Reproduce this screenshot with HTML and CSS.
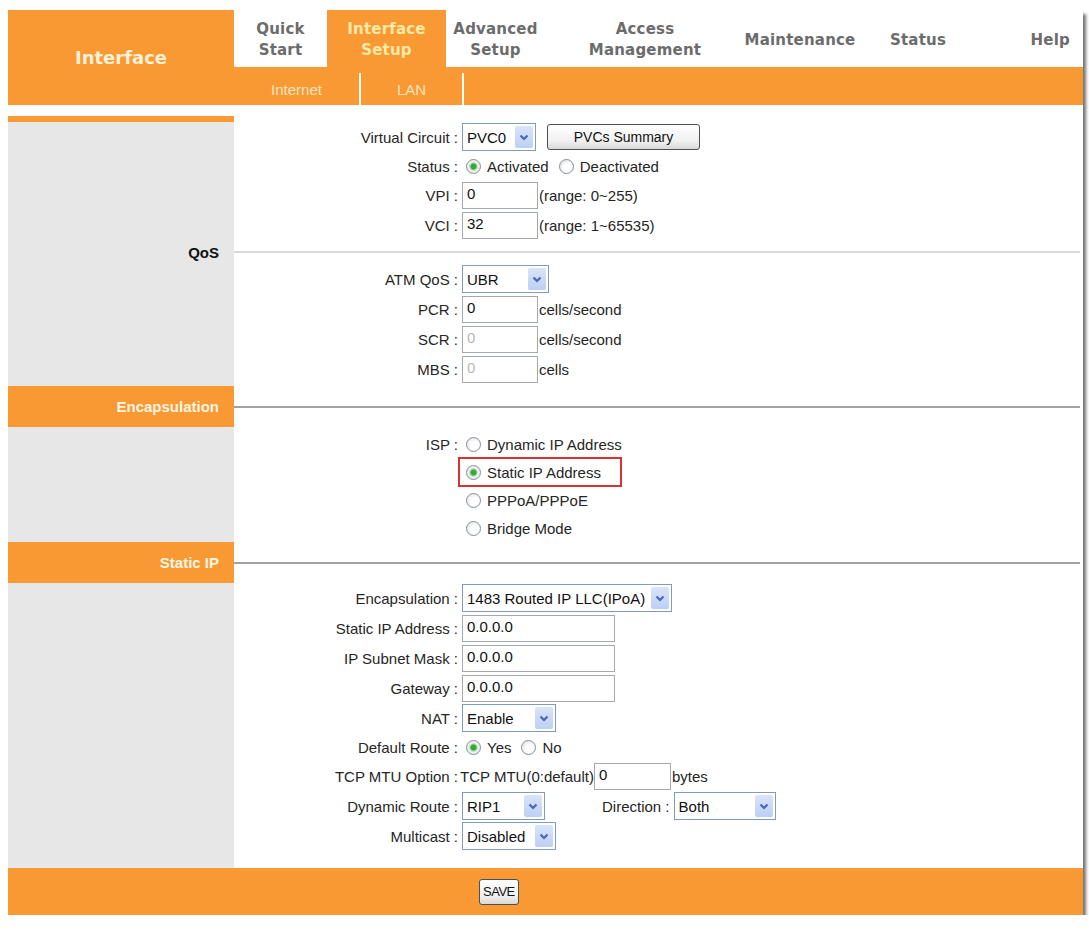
FILE: index.html
```html
<!DOCTYPE html>
<html lang="en">
<head>
  <meta charset="UTF-8">
  <meta name="viewport" content="width=device-width, initial-scale=1.0">
  <title>Interface Setup - Internet</title>
  <link rel="stylesheet" href="styles.css">
</head>
<body>
  <div class="page">
    <header class="topbar">
      <div class="brand">Interface</div>
      <div class="menus">
        <nav class="tabs">
          <a class="tab">Quick<br>Start</a>
          <a class="tab active">Interface<br>Setup</a>
          <a class="tab">Advanced<br>Setup</a>
          <a class="tab">Access<br>Management</a>
          <a class="tab">Maintenance</a>
          <a class="tab">Status</a>
          <a class="tab help">Help</a>
        </nav>
        <nav class="subtabs">
          <a class="subtab internet">Internet</a>
          <a class="subtab lan">LAN</a>
        </nav>
      </div>
    </header>

    <form class="panel">
      <div class="cap"></div>

      <!-- ATM virtual circuit -->
      <div class="group">
        <div class="field">
          <label class="field-label">Virtual Circuit :</label>
          <span class="select sel-pvc">
            <select><option>PVC0</option><option>PVC1</option></select>
            <span class="select-btn"><svg width="10" height="7" viewBox="0 0 10 7"><path d="M1.5 1.5 5 5 8.5 1.5" fill="none" stroke="#4a67b3" stroke-width="2.2"/></svg></span>
          </span>
          <button type="button" class="btn btn-summary">PVCs Summary</button>
        </div>
        <div class="field tight">
          <label class="field-label">Status :</label>
          <label class="option"><input type="radio" class="radio" name="status" checked>Activated</label>
          <label class="option"><input type="radio" class="radio" name="status">Deactivated</label>
        </div>
        <div class="field">
          <label class="field-label">VPI :</label>
          <input type="text" class="text" value="0">
          <span class="hint">(range: 0~255)</span>
        </div>
        <div class="field">
          <label class="field-label">VCI :</label>
          <input type="text" class="text" value="32">
          <span class="hint">(range: 1~65535)</span>
        </div>
      </div>

      <div class="section-title">
        <span class="section-name">QoS</span>
        <span class="section-rule"></span>
      </div>

      <div class="group group-qos">
        <div class="field">
          <label class="field-label">ATM QoS :</label>
          <span class="select sel-qos">
            <select><option>UBR</option><option>CBR</option><option>rt-VBR</option><option>nrt-VBR</option></select>
            <span class="select-btn"><svg width="10" height="7" viewBox="0 0 10 7"><path d="M1.5 1.5 5 5 8.5 1.5" fill="none" stroke="#4a67b3" stroke-width="2.2"/></svg></span>
          </span>
        </div>
        <div class="field">
          <label class="field-label">PCR :</label>
          <input type="text" class="text" value="0">
          <span class="hint">cells/second</span>
        </div>
        <div class="field">
          <label class="field-label">SCR :</label>
          <input type="text" class="text" value="0" disabled>
          <span class="hint">cells/second</span>
        </div>
        <div class="field">
          <label class="field-label">MBS :</label>
          <input type="text" class="text" value="0" disabled>
          <span class="hint">cells</span>
        </div>
      </div>

      <div class="section-title accent">
        <span class="section-name">Encapsulation</span>
        <span class="section-rule"></span>
      </div>

      <div class="group group-isp">
        <div class="field tight">
          <label class="field-label">ISP :</label>
          <label class="option"><input type="radio" class="radio" name="isp">Dynamic IP Address</label>
        </div>
        <div class="field tight">
          <span class="field-label"></span>
          <label class="option picked"><input type="radio" class="radio" name="isp" checked>Static IP Address</label>
        </div>
        <div class="field tight">
          <span class="field-label"></span>
          <label class="option"><input type="radio" class="radio" name="isp">PPPoA/PPPoE</label>
        </div>
        <div class="field tight">
          <span class="field-label"></span>
          <label class="option"><input type="radio" class="radio" name="isp">Bridge Mode</label>
        </div>
      </div>

      <div class="section-title accent">
        <span class="section-name">Static IP</span>
        <span class="section-rule"></span>
      </div>

      <div class="group group-static">
        <div class="field">
          <label class="field-label">Encapsulation :</label>
          <span class="select sel-encap">
            <select><option>1483 Routed IP LLC(IPoA)</option><option>1483 Routed IP VC-Mux</option></select>
            <span class="select-btn"><svg width="10" height="7" viewBox="0 0 10 7"><path d="M1.5 1.5 5 5 8.5 1.5" fill="none" stroke="#4a67b3" stroke-width="2.2"/></svg></span>
          </span>
        </div>
        <div class="field">
          <label class="field-label">Static IP Address :</label>
          <input type="text" class="text ip" value="0.0.0.0">
        </div>
        <div class="field">
          <label class="field-label">IP Subnet Mask :</label>
          <input type="text" class="text ip" value="0.0.0.0">
        </div>
        <div class="field">
          <label class="field-label">Gateway :</label>
          <input type="text" class="text ip" value="0.0.0.0">
        </div>
        <div class="field">
          <label class="field-label">NAT :</label>
          <span class="select sel-nat">
            <select><option>Enable</option><option>Disable</option></select>
            <span class="select-btn"><svg width="10" height="7" viewBox="0 0 10 7"><path d="M1.5 1.5 5 5 8.5 1.5" fill="none" stroke="#4a67b3" stroke-width="2.2"/></svg></span>
          </span>
        </div>
        <div class="field tight">
          <label class="field-label">Default Route :</label>
          <label class="option"><input type="radio" class="radio" name="route" checked>Yes</label>
          <label class="option"><input type="radio" class="radio" name="route">No</label>
        </div>
        <div class="field">
          <label class="field-label">TCP MTU Option :</label>
          <span class="mtu-text">TCP MTU(0:default)</span>
          <input type="text" class="text mtu" value="0">
          <span class="hint">bytes</span>
        </div>
        <div class="field">
          <label class="field-label">Dynamic Route :</label>
          <span class="select sel-rip">
            <select><option>RIP1</option><option>RIP2-B</option><option>RIP2-M</option></select>
            <span class="select-btn"><svg width="10" height="7" viewBox="0 0 10 7"><path d="M1.5 1.5 5 5 8.5 1.5" fill="none" stroke="#4a67b3" stroke-width="2.2"/></svg></span>
          </span>
          <label class="inline-label">Direction :</label>
          <span class="select sel-dir">
            <select><option>Both</option><option>None</option><option>IN Only</option><option>OUT Only</option></select>
            <span class="select-btn"><svg width="10" height="7" viewBox="0 0 10 7"><path d="M1.5 1.5 5 5 8.5 1.5" fill="none" stroke="#4a67b3" stroke-width="2.2"/></svg></span>
          </span>
        </div>
        <div class="field">
          <label class="field-label">Multicast :</label>
          <span class="select sel-nat">
            <select><option>Disabled</option><option>IGMP v1</option><option>IGMP v2</option></select>
            <span class="select-btn"><svg width="10" height="7" viewBox="0 0 10 7"><path d="M1.5 1.5 5 5 8.5 1.5" fill="none" stroke="#4a67b3" stroke-width="2.2"/></svg></span>
          </span>
        </div>
      </div>

      <div class="actions">
        <button type="button" class="btn btn-save">SAVE</button>
      </div>
    </form>
  </div>
</body>
</html>
```

FILE: styles.css
```css
body {
  margin: 0;
  padding: 10px 8px 0;
  background: #fff;
  font-family: "Liberation Sans", Arial, sans-serif;
  font-size: 15px;
  color: #262626;
}

.page {
  width: 1075px;
  background: #fff;
  box-shadow: 3px 4px 3px rgba(0, 0, 0, 0.55);
}

/* header */

.topbar {
  display: flex;
  height: 95px;
}

.brand {
  width: 226px;
  flex-shrink: 0;
  display: flex;
  align-items: center;
  justify-content: center;
  background: #f89934;
  color: #fdf0d9;
  font-family: "DejaVu Sans", Verdana, sans-serif;
  font-size: 18px;
  font-weight: bold;
}

.menus {
  flex: 1;
  display: flex;
  flex-direction: column;
}

.tabs {
  height: 57px;
  display: grid;
  grid-template-columns: 93px 119px 99px 200px 110px 126px 1fr;
}

.tab {
  display: flex;
  align-items: center;
  justify-content: center;
  padding-top: 3px;
  text-align: center;
  font-family: "DejaVu Sans", Verdana, sans-serif;
  font-size: 15px;
  font-weight: bold;
  line-height: 21px;
  letter-spacing: 0.2px;
  color: #6c6c6c;
}

.tab.active {
  background: #f89934;
  color: #ffe9a6;
}

.tab.help {
  justify-content: flex-end;
  padding-right: 13px;
}

.subtabs {
  height: 38px;
  display: flex;
  align-items: flex-end;
  background: #f89934;
}

.subtab {
  height: 32px;
  display: flex;
  align-items: center;
  justify-content: center;
  border-right: 2px solid #fff;
  color: #fde3bf;
  font-size: 15px;
}

.subtab.internet {
  width: 125px;
}

.subtab.lan {
  width: 101px;
}

/* form panel */

.panel {
  margin: 11px 0 0;
  background: linear-gradient(to right, #e7e7e7 226px, #fff 226px);
}

.cap {
  width: 226px;
  height: 6px;
  background: #f89934;
}

.group {
  margin-left: 226px;
}

.group-qos {
  padding-bottom: 2px;
}

.group-isp {
  padding-top: 3px;
}

.group-static {
  padding-bottom: 17px;
}

.field {
  display: flex;
  align-items: center;
  height: 30px;
}

.field.tight {
  height: 28px;
}

.field-label {
  width: 228px;
  flex-shrink: 0;
  box-sizing: border-box;
  padding-right: 4px;
  text-align: right;
}

.section-title {
  display: flex;
  align-items: center;
  height: 24px;
}

.section-name {
  width: 226px;
  flex-shrink: 0;
  align-self: stretch;
  box-sizing: border-box;
  display: flex;
  align-items: center;
  justify-content: flex-end;
  padding-right: 15px;
  font-size: 15px;
  font-weight: bold;
  color: #111;
}

.section-rule {
  flex: 1;
  height: 2px;
  margin-right: 3px;
  background: #d9d9d9;
}

.section-title.accent {
  height: 41px;
}

.section-title.accent .section-name {
  background: #f89934;
  color: #fff5e3;
}

.section-title.accent .section-rule {
  background: #a2a2a2;
}

/* controls */

.text {
  width: 76px;
  height: 27px;
  box-sizing: border-box;
  margin: 0;
  padding: 0 4px 3px;
  border: 1px solid #a3a9ae;
  font: inherit;
  color: #111;
}

.text.ip {
  width: 153px;
}

.text.mtu {
  width: 77px;
}

.text:disabled {
  background: #fff;
  color: #b8b8b8;
}

.hint {
  margin-left: 1px;
}

.mtu-text {
  margin-left: -2px;
}

.inline-label {
  margin-left: 57px;
  margin-right: 4px;
}

.select {
  position: relative;
  display: inline-block;
  height: 28px;
  box-sizing: border-box;
  border: 1px solid #7f9db9;
  background: #fff;
}

.select select {
  -webkit-appearance: none;
  appearance: none;
  width: 100%;
  height: 100%;
  margin: 0;
  padding: 0 22px 0 4px;
  border: 0;
  background: transparent;
  font: inherit;
  color: #111;
  outline: none;
}

.select-btn {
  position: absolute;
  top: 2px;
  right: 2px;
  bottom: 2px;
  width: 18px;
  display: flex;
  align-items: center;
  justify-content: center;
  border-radius: 2px;
  background: linear-gradient(#d9e4fb, #bccff4);
  pointer-events: none;
}

.sel-pvc { width: 74px; }
.sel-qos { width: 87px; }
.sel-encap { width: 210px; }
.sel-nat { width: 94px; }
.sel-rip { width: 83px; }
.sel-dir { width: 102px; }

.option {
  display: inline-flex;
  align-items: center;
  height: 100%;
}

.option + .option {
  margin-left: 6px;
}

.radio {
  -webkit-appearance: none;
  appearance: none;
  width: 15px;
  height: 15px;
  box-sizing: border-box;
  margin: 0 6px 0 4px;
  border: 1px solid #84909b;
  border-radius: 50%;
  background: radial-gradient(circle at 60% 60%, #fff 35%, #dadada);
}

.radio:checked {
  background: radial-gradient(circle, #37a63f 0 2.5px, #a9dca9 3.5px, #f3f3f3 5px, #d8d8d8);
}

.option.picked {
  box-sizing: border-box;
  height: 30px;
  margin-left: -4px;
  padding: 0 19px 0 2px;
  border: 2px solid #d63434;
}

.btn {
  height: 26px;
  border: 1px solid #4f4f4f;
  border-radius: 3px;
  background: linear-gradient(#fff, #f1f1f1 65%, #d9d9d9);
  font-family: "Liberation Sans", Arial, sans-serif;
  font-size: 14px;
  color: #111;
  cursor: pointer;
}

.btn-summary {
  width: 153px;
  margin-left: 11px;
}

/* save bar */

.actions {
  height: 47px;
  display: flex;
  align-items: center;
  padding-left: 471px;
  background: #f89934;
}

.btn-save {
  padding: 0 3px;
  font-size: 13px;
  letter-spacing: -0.5px;
}
```
